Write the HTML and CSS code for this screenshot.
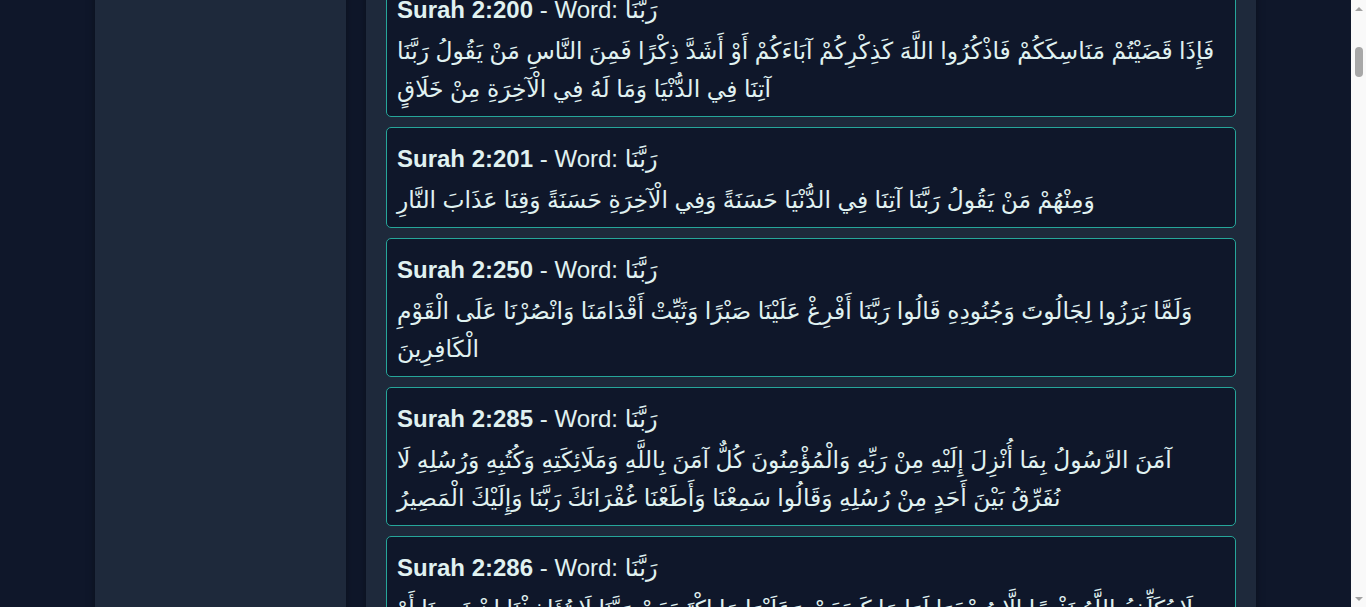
FILE: index.html
```html
<!DOCTYPE html>
<html lang="en">
<head>
<meta charset="utf-8">
<title>Search results: رَبَّنَا</title>
<link rel="stylesheet" href="styles.css">
</head>
<body>
<div class="layout">
  <aside class="sidebar"></aside>
  <main class="results">
    <div class="card">
      <h3 class="card-title"><strong>Surah 2:127</strong> - Word: رَبَّنَا</h3>
      <p class="card-text">وَإِذْ يَرْفَعُ إِبْرَاهِيمُ الْقَوَاعِدَ مِنَ الْبَيْتِ وَإِسْمَاعِيلُ رَبَّنَا تَقَبَّلْ مِنَّا إِنَّكَ أَنْتَ السَّمِيعُ الْعَلِيمُ</p>
    </div>
    <div class="card">
      <h3 class="card-title"><strong>Surah 2:128</strong> - Word: رَبَّنَا</h3>
      <p class="card-text">رَبَّنَا وَاجْعَلْنَا مُسْلِمَيْنِ لَكَ وَمِنْ ذُرِّيَّتِنَا أُمَّةً مُسْلِمَةً لَكَ وَأَرِنَا مَنَاسِكَنَا وَتُبْ عَلَيْنَا إِنَّكَ أَنْتَ التَّوَّابُ الرَّحِيمُ</p>
    </div>
    <div class="card">
      <h3 class="card-title"><strong>Surah 2:129</strong> - Word: رَبَّنَا</h3>
      <p class="card-text">رَبَّنَا وَابْعَثْ فِيهِمْ رَسُولًا مِنْهُمْ يَتْلُو عَلَيْهِمْ آيَاتِكَ وَيُعَلِّمُهُمُ الْكِتَابَ وَالْحِكْمَةَ وَيُزَكِّيهِمْ إِنَّكَ أَنْتَ الْعَزِيزُ الْحَكِيمُ</p>
    </div>
    <div class="card" id="v2-200">
      <h3 class="card-title"><strong>Surah 2:200</strong> - Word: رَبَّنَا</h3>
      <p class="card-text">فَإِذَا قَضَيْتُمْ مَنَاسِكَكُمْ فَاذْكُرُوا اللَّهَ كَذِكْرِكُمْ آبَاءَكُمْ أَوْ أَشَدَّ ذِكْرًا فَمِنَ النَّاسِ مَنْ يَقُولُ رَبَّنَا آتِنَا فِي الدُّنْيَا وَمَا لَهُ فِي الْآخِرَةِ مِنْ خَلَاقٍ</p>
    </div>
    <div class="card">
      <h3 class="card-title"><strong>Surah 2:201</strong> - Word: رَبَّنَا</h3>
      <p class="card-text">وَمِنْهُمْ مَنْ يَقُولُ رَبَّنَا آتِنَا فِي الدُّنْيَا حَسَنَةً وَفِي الْآخِرَةِ حَسَنَةً وَقِنَا عَذَابَ النَّارِ</p>
    </div>
    <div class="card">
      <h3 class="card-title"><strong>Surah 2:250</strong> - Word: رَبَّنَا</h3>
      <p class="card-text">وَلَمَّا بَرَزُوا لِجَالُوتَ وَجُنُودِهِ قَالُوا رَبَّنَا أَفْرِغْ عَلَيْنَا صَبْرًا وَثَبِّتْ أَقْدَامَنَا وَانْصُرْنَا عَلَى الْقَوْمِ الْكَافِرِينَ</p>
    </div>
    <div class="card">
      <h3 class="card-title"><strong>Surah 2:285</strong> - Word: رَبَّنَا</h3>
      <p class="card-text">آمَنَ الرَّسُولُ بِمَا أُنْزِلَ إِلَيْهِ مِنْ رَبِّهِ وَالْمُؤْمِنُونَ كُلٌّ آمَنَ بِاللَّهِ وَمَلَائِكَتِهِ وَكُتُبِهِ وَرُسُلِهِ لَا نُفَرِّقُ بَيْنَ أَحَدٍ مِنْ رُسُلِهِ وَقَالُوا سَمِعْنَا وَأَطَعْنَا غُفْرَانَكَ رَبَّنَا وَإِلَيْكَ الْمَصِيرُ</p>
    </div>
    <div class="card">
      <h3 class="card-title"><strong>Surah 2:286</strong> - Word: رَبَّنَا</h3>
      <p class="card-text">لَا يُكَلِّفُ اللَّهُ نَفْسًا إِلَّا وُسْعَهَا لَهَا مَا كَسَبَتْ وَعَلَيْهَا مَا اكْتَسَبَتْ رَبَّنَا لَا تُؤَاخِذْنَا إِنْ نَسِينَا أَوْ أَخْطَأْنَا رَبَّنَا وَلَا تَحْمِلْ عَلَيْنَا إِصْرًا كَمَا حَمَلْتَهُ عَلَى الَّذِينَ مِنْ قَبْلِنَا رَبَّنَا وَلَا تُحَمِّلْنَا مَا لَا طَاقَةَ لَنَا بِهِ وَاعْفُ عَنَّا وَاغْفِرْ لَنَا وَارْحَمْنَا أَنْتَ مَوْلَانَا فَانْصُرْنَا عَلَى الْقَوْمِ الْكَافِرِينَ</p>
    </div>
    <div class="card">
      <h3 class="card-title"><strong>Surah 3:8</strong> - Word: رَبَّنَا</h3>
      <p class="card-text">رَبَّنَا لَا تُزِغْ قُلُوبَنَا بَعْدَ إِذْ هَدَيْتَنَا وَهَبْ لَنَا مِنْ لَدُنْكَ رَحْمَةً إِنَّكَ أَنْتَ الْوَهَّابُ</p>
    </div>
    <div class="card">
      <h3 class="card-title"><strong>Surah 3:9</strong> - Word: رَبَّنَا</h3>
      <p class="card-text">رَبَّنَا إِنَّكَ جَامِعُ النَّاسِ لِيَوْمٍ لَا رَيْبَ فِيهِ إِنَّ اللَّهَ لَا يُخْلِفُ الْمِيعَادَ</p>
    </div>
    <div class="card">
      <h3 class="card-title"><strong>Surah 3:16</strong> - Word: رَبَّنَا</h3>
      <p class="card-text">الَّذِينَ يَقُولُونَ رَبَّنَا إِنَّنَا آمَنَّا فَاغْفِرْ لَنَا ذُنُوبَنَا وَقِنَا عَذَابَ النَّارِ</p>
    </div>
    <div class="card">
      <h3 class="card-title"><strong>Surah 3:53</strong> - Word: رَبَّنَا</h3>
      <p class="card-text">رَبَّنَا آمَنَّا بِمَا أَنْزَلْتَ وَاتَّبَعْنَا الرَّسُولَ فَاكْتُبْنَا مَعَ الشَّاهِدِينَ</p>
    </div>
    <div class="card">
      <h3 class="card-title"><strong>Surah 3:147</strong> - Word: رَبَّنَا</h3>
      <p class="card-text">وَمَا كَانَ قَوْلَهُمْ إِلَّا أَنْ قَالُوا رَبَّنَا اغْفِرْ لَنَا ذُنُوبَنَا وَإِسْرَافَنَا فِي أَمْرِنَا وَثَبِّتْ أَقْدَامَنَا وَانْصُرْنَا عَلَى الْقَوْمِ الْكَافِرِينَ</p>
    </div>
    <div class="card">
      <h3 class="card-title"><strong>Surah 3:192</strong> - Word: رَبَّنَا</h3>
      <p class="card-text">رَبَّنَا إِنَّكَ مَنْ تُدْخِلِ النَّارَ فَقَدْ أَخْزَيْتَهُ وَمَا لِلظَّالِمِينَ مِنْ أَنْصَارٍ</p>
    </div>
    <div class="card">
      <h3 class="card-title"><strong>Surah 3:194</strong> - Word: رَبَّنَا</h3>
      <p class="card-text">رَبَّنَا وَآتِنَا مَا وَعَدْتَنَا عَلَى رُسُلِكَ وَلَا تُخْزِنَا يَوْمَ الْقِيَامَةِ إِنَّكَ لَا تُخْلِفُ الْمِيعَادَ</p>
    </div>
  </main>
</div>
<div class="scrollbar" aria-hidden="true">
  <span class="sb-arrow sb-up"></span>
  <span class="sb-thumb"></span>
  <span class="sb-arrow sb-down"></span>
</div>
<script src="script.js"></script>
</body>
</html>
```

FILE: styles.css
```css
html, body {
  margin: 0;
  padding: 0;
}

body {
  background: #0f172a;
  color: #e0f2f1;
  font-family: "Liberation Sans", "DejaVu Sans", sans-serif;
  padding-right: 15px;
}

.layout {
  max-width: 1161px;
  margin: 0 auto;
  display: grid;
  grid-template-columns: 251px 1fr;
  gap: 20px;
}

.sidebar {
  background: #1e293b;
  box-shadow: 0 0 8px rgba(0, 0, 0, 0.35);
}

.results {
  background: #1e293b;
  box-shadow: 0 0 8px rgba(0, 0, 0, 0.35);
  padding: 20px;
  display: flex;
  flex-direction: column;
  gap: 10px;
}

.card {
  background: #0f172a;
  border: 1px solid #26a69a;
  border-radius: 5px;
  padding: 12px 10px 8px;
}

.card-title {
  margin: 0 0 3px;
  font-size: 24px;
  line-height: 38px;
  font-weight: normal;
}

.card-title strong {
  font-weight: bold;
}

.card-text {
  margin: 0;
  font-size: 23.4px;
  line-height: 38px;
}

/* browser scrollbar of the scrolled window */
.scrollbar {
  position: fixed;
  top: 0;
  right: 0;
  bottom: 0;
  width: 15px;
  background: #f9f9f9;
  display: flex;
  flex-direction: column;
  align-items: center;
}

.sb-arrow {
  width: 0;
  height: 0;
  border-left: 4px solid transparent;
  border-right: 4px solid transparent;
}

.sb-up {
  margin-top: 7px;
  border-bottom: 4px solid #a3a3a3;
}

.sb-down {
  margin-top: auto;
  margin-bottom: 6px;
  border-top: 4px solid #a3a3a3;
}

.sb-thumb {
  width: 8px;
  height: 30px;
  margin-top: 36px;
  border-radius: 4px;
  background: #a8a8a8;
}
```

FILE: script.js
```js
(function () {
  if ('scrollRestoration' in history) {
    history.scrollRestoration = 'manual';
  }
  function place() {
    var card = document.getElementById('v2-200');
    if (!card) return;
    var top = card.getBoundingClientRect().top + window.scrollY;
    window.scrollTo(0, Math.round(top + 22));
  }
  place();
  window.addEventListener('load', place);
})();
```
